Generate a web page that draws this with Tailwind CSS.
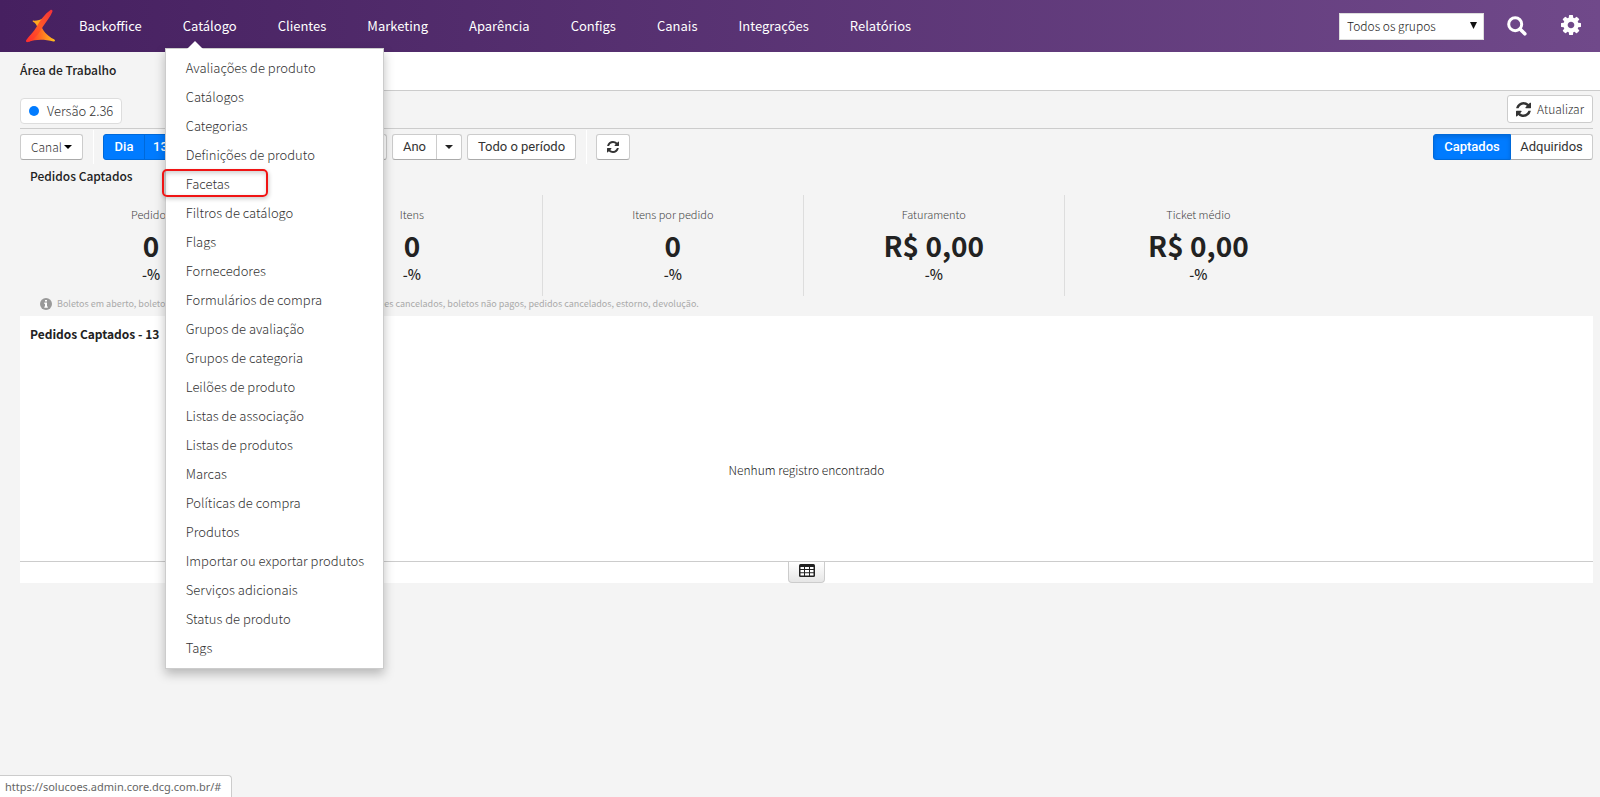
<!DOCTYPE html>
<html lang="pt-BR">
<head>
<meta charset="utf-8">
<title>Área de Trabalho</title>
<script src="https://cdn.jsdelivr.net/npm/@tailwindcss/browser@4"></script>
</head>
<body class="flex min-h-screen flex-col bg-[#f4f4f4] font-['Noto_Sans_CJK_SC',sans-serif] text-[13px] leading-5 text-[#222]">
<svg class="hidden">
  <symbol id="refresh" viewBox="0 0 1536 1536"><path fill="currentColor" d="M1511 928q0 5-1 7-64 268-268 434.500T764 1536q-146 0-282.500-55T238 1324l-129 129q-19 19-45 19t-45-19-19-45V960q0-26 19-45t45-19h448q26 0 45 19t19 45-19 45l-137 137q71 66 161 102t187 36q134 0 250-65t186-179q11-17 53-117 8-23 30-23h192q13 0 22.500 9.500t9.500 22.500zm25-800v448q0 26-19 45t-45 19h-448q-26 0-45-19t-19-45 19-45l138-138Q969 256 768 256q-134 0-250 65T332 500q-11 17-53 117-8 23-30 23H50q-13 0-22.500-9.500T18 608v-7q65-268 270-434.500T768 0q146 0 284 55.500T1297 212l130-129q19-19 45-19t45 19 19 45z"/></symbol>
</svg>

<header class="flex h-[52px] items-center bg-linear-to-r from-[#462060] to-[#70498a]">
  <a href="#" aria-label="Início" class="ml-6 w-[35px]">
    <svg class="h-[35px] w-[33px]" viewBox="0 0 33 35">
      <defs>
        <linearGradient id="lg1" x1="0" y1="0" x2="1" y2="0"><stop offset="0" stop-color="#ff2a2f"/><stop offset=".45" stop-color="#ff6a23"/><stop offset="1" stop-color="#ffc21c"/></linearGradient>
        <linearGradient id="lg2" x1="1" y1="0" x2="0" y2="1"><stop offset="0" stop-color="#f5303a"/><stop offset=".5" stop-color="#ff5a25"/><stop offset="1" stop-color="#ff2a2f"/></linearGradient>
      </defs>
      <path fill="url(#lg1)" d="M17 15.500c1 5.500 6 11.500 13 14.800 1.600.8 1.200 2.500-.5 2.200C20 30 12 30 4 33z"/>
      <path fill="#ffa81e" d="M9 11.600c4 .2 7.500-.6 10-2.600l-5.500 10c-.5-3-2.200-5-4.500-6.200-.6-.4-.5-1.200 0-1.200z"/>
      <path fill="url(#lg2)" d="M26.500 1c1.200-.6 2.400.4 1.900 1.800C26.500 8 22 13 19 17.500c-3.500 6-8 13-15 15.600-1.500.5-2.600-.8-1.700-2.200C5 27 9.500 23.500 12.500 18 16 11 21 5 26.500 1z"/>
    </svg>
  </a>
  <nav class="flex-1">
    <ul class="flex text-[13px] text-white">
      <li class="pr-[21px] pl-5"><a href="#">Backoffice</a></li>
      <li class="relative pr-[21px] pl-5"><a href="#">Catálogo</a>
        <svg class="absolute top-[25px] left-6 z-20 h-2 w-4" viewBox="0 0 16 8"><path fill="#fff" d="M0 8 8 0l8 8z"/></svg>
        <ul class="absolute top-8 left-0.5 z-10 w-[219px] border border-[#ccc] bg-white pt-1 pb-1.5 text-[13px] font-light whitespace-nowrap text-[#333] shadow-[0_5px_10px_rgba(0,0,0,0.25)]">
          <li><a href="#" class="block px-5 leading-[29px]">Avaliações de produto</a></li>
          <li><a href="#" class="block px-5 leading-[29px]">Catálogos</a></li>
          <li><a href="#" class="block px-5 leading-[29px]">Categorias</a></li>
          <li><a href="#" class="block px-5 leading-[29px]">Definições de produto</a></li>
          <li class="relative"><a href="#" class="block px-5 leading-[29px]">Facetas</a><span class="absolute top-0 -left-1 h-7 w-[106px] rounded-[5px] border-2 border-[#f01414] shadow-[1px_2px_4px_rgba(0,0,0,0.2),inset_1px_2px_5px_rgba(0,0,0,0.2)]"></span></li>
          <li><a href="#" class="block px-5 leading-[29px]">Filtros de catálogo</a></li>
          <li><a href="#" class="block px-5 leading-[29px]">Flags</a></li>
          <li><a href="#" class="block px-5 leading-[29px]">Fornecedores</a></li>
          <li><a href="#" class="block px-5 leading-[29px]">Formulários de compra</a></li>
          <li><a href="#" class="block px-5 leading-[29px]">Grupos de avaliação</a></li>
          <li><a href="#" class="block px-5 leading-[29px]">Grupos de categoria</a></li>
          <li><a href="#" class="block px-5 leading-[29px]">Leilões de produto</a></li>
          <li><a href="#" class="block px-5 leading-[29px]">Listas de associação</a></li>
          <li><a href="#" class="block px-5 leading-[29px]">Listas de produtos</a></li>
          <li><a href="#" class="block px-5 leading-[29px]">Marcas</a></li>
          <li><a href="#" class="block px-5 leading-[29px]">Políticas de compra</a></li>
          <li><a href="#" class="block px-5 leading-[29px]">Produtos</a></li>
          <li><a href="#" class="block px-5 leading-[29px]">Importar ou exportar produtos</a></li>
          <li><a href="#" class="block px-5 leading-[29px]">Serviços adicionais</a></li>
          <li><a href="#" class="block px-5 leading-[29px]">Status de produto</a></li>
          <li><a href="#" class="block px-5 leading-[29px]">Tags</a></li>
        </ul>
      </li>
      <li class="pr-[21px] pl-5"><a href="#">Clientes</a></li>
      <li class="pr-[21px] pl-5"><a href="#">Marketing</a></li>
      <li class="pr-[21px] pl-5"><a href="#">Aparência</a></li>
      <li class="pr-[21px] pl-5"><a href="#">Configs</a></li>
      <li class="pr-[21px] pl-5"><a href="#">Canais</a></li>
      <li class="pr-[21px] pl-5"><a href="#">Integrações</a></li>
      <li class="pr-[21px] pl-5"><a href="#">Relatórios</a></li>
    </ul>
  </nav>
  <div class="relative">
    <select aria-label="Grupo" class="block h-[27px] w-[145px] appearance-none border border-[#ddd] bg-white pl-[7px] text-[12px] font-light text-[#222]"><option>Todos os grupos</option></select>
    <svg class="pointer-events-none absolute top-[9px] right-[7px] h-[7px] w-[7px]" viewBox="0 0 7 7"><path fill="#111" d="M0 0h7L3.500 7z"/></svg>
  </div>
  <button aria-label="Buscar" class="ml-[23px] text-white"><svg class="h-5 w-5" viewBox="0 0 20 20" fill="none" stroke="currentColor"><circle cx="8.200" cy="8.200" r="6.500" stroke-width="3"/><path d="m13 13 4.800 4.800" stroke-width="3.600" stroke-linecap="round"/></svg></button>
  <button aria-label="Configurações" class="mr-[19px] ml-[34px] text-white"><svg class="mb-[2px] h-5 w-5" viewBox="0 0 1536 1536"><path fill="currentColor" d="M1024 768q0-106-75-181t-181-75-181 75-75 181 75 181 181 75 181-75 75-181zm512-109v222q0 12-8 23t-20 13l-185 28q-19 54-39 91 35 50 107 138 10 12 10 25t-9 23q-27 37-99 108t-94 71q-12 0-26-9l-138-108q-44 23-91 38-16 136-29 186-7 28-36 28H657q-14 0-24.500-8.500T621 1506l-28-184q-49-16-90-37l-141 107q-10 9-25 9-14 0-25-11-126-114-165-168-7-10-7-23 0-12 8-23 15-21 51-66.500t54-70.500q-27-50-41-99L29 913q-13-2-21-12.500T0 877V655q0-12 8-23t19-13l186-28q14-46 39-92-40-57-107-138-10-12-10-24 0-10 9-23 26-36 98.500-107.500T337 135q13 0 26 10l138 107q44-23 91-38 16-136 29-186 7-28 36-28h222q14 0 24.500 8.500T915 30l28 184q49 16 90 37l142-107q9-9 24-9 13 0 25 10 129 119 165 170 7 8 7 22 0 12-8 23-15 21-51 66.500t-54 70.500q26 50 41 98l183 28q13 2 21 12.500t8 23.500z"/></svg></button>
</header>

<div class="flex h-[39px] border-b border-[#ccc] bg-white">
  <h1 class="-mb-px w-[184px] bg-[#f4f4f4] pl-5 text-[12px] leading-9 font-medium">Área de Trabalho</h1>
</div>

<main class="mr-[7px] ml-5">
  <div class="flex h-[38px] items-start justify-between border-b border-[#ccc]">
    <button class="mt-[7px] flex h-[26px] items-center gap-2 rounded border border-[#ddd] bg-white px-2 font-light text-[#333]"><span class="size-2.5 rounded-full bg-[#007bff]"></span>Versão 2.36</button>
    <button class="mt-1 flex h-7 items-center gap-1.5 rounded-[3px] border border-[#ccc] bg-white px-2 text-[12px] font-light text-[#333]"><svg class="size-[15px] text-[#333]"><use href="#refresh"/></svg>Atualizar</button>
  </div>

  <div class="flex h-9 items-center font-[Roboto,sans-serif] text-[13px] text-[#333]">
    <button class="flex h-[26px] w-[63px] items-center justify-center gap-0.5 rounded-[3px] border border-[#ccc] border-b-[#aaa] bg-white font-['Noto_Sans_CJK_SC',sans-serif] text-[12px] font-light">Canal<svg class="h-1 w-2" viewBox="0 0 8 4"><path d="M0 0h8L4 4z"/></svg></button>
    <span class="mr-[9px] ml-[10px] h-[34px] w-px bg-white"></span>
    <div class="flex h-[26px] overflow-hidden rounded-[3px] border border-[#0069d9] bg-[#007bff] font-medium text-white">
      <button class="w-[41px] border-r border-[#0069d9]">Dia</button>
      <button class="w-[121px] pl-2 text-left">13</button>
    </div>
    <div class="ml-[5px] flex h-[26px] rounded-[3px] border border-[#ccc] border-b-[#aaa] bg-white">
      <button class="w-[113px]">Mês</button>
    </div>
    <div class="ml-[5px] flex h-[26px] rounded-[3px] border border-[#ccc] border-b-[#aaa] bg-white">
      <button class="w-11 border-r border-[#ccc]">Ano</button>
      <button aria-label="Escolher ano" class="flex w-6 items-center justify-center"><svg class="h-1 w-2" viewBox="0 0 8 4"><path fill="#222" d="M0 0h8L4 4z"/></svg></button>
    </div>
    <button class="ml-[5px] h-[26px] w-[109px] rounded-[3px] border border-[#ccc] border-b-[#aaa] bg-white">Todo o período</button>
    <span class="mr-[9px] ml-[10px] h-[34px] w-px bg-white"></span>
    <button aria-label="Recarregar" class="flex h-[26px] w-[34px] items-center justify-center rounded-[3px] border border-[#ccc] border-b-[#aaa] bg-white"><svg class="size-3"><use href="#refresh"/></svg></button>
    <div class="ml-auto flex h-[26px]">
      <button class="w-[78px] rounded-l-[3px] border border-[#0069d9] bg-[#007bff] font-medium text-white shadow-[inset_0_2px_4px_rgba(0,0,0,0.15)]">Captados</button>
      <button class="w-[82px] rounded-r-[3px] border border-l-0 border-[#ccc] border-b-[#aaa] bg-white">Adquiridos</button>
    </div>
  </div>

  <section>
    <h2 class="h-[30px] px-2.5 pt-px text-[12px] font-medium">Pedidos Captados</h2>
    <dl class="flex h-[101px] pl-px text-center">
      <div class="w-[16.6%] border-r border-[#ddd] pt-[9px]"><dt class="text-[11px] font-light text-[#444]">Pedidos</dt><dd class="text-[28px] leading-[42px] font-bold">0</dd><dd class="text-sm leading-4 font-medium">-%</dd></div>
      <div class="w-[16.6%] border-r border-[#ddd] pt-[9px]"><dt class="text-[11px] font-light text-[#444]">Itens</dt><dd class="text-[28px] leading-[42px] font-bold">0</dd><dd class="text-sm leading-4 font-medium">-%</dd></div>
      <div class="w-[16.6%] border-r border-[#ddd] pt-[9px]"><dt class="text-[11px] font-light text-[#444]">Itens por pedido</dt><dd class="text-[28px] leading-[42px] font-bold">0</dd><dd class="text-sm leading-4 font-medium">-%</dd></div>
      <div class="w-[16.6%] border-r border-[#ddd] pt-[9px]"><dt class="text-[11px] font-light text-[#444]">Faturamento</dt><dd class="text-[28px] leading-[42px] font-bold">R$ 0,00</dd><dd class="text-sm leading-4 font-medium">-%</dd></div>
      <div class="w-[17%] pt-[9px]"><dt class="text-[11px] font-light text-[#444]">Ticket médio</dt><dd class="text-[28px] leading-[42px] font-bold">R$ 0,00</dd><dd class="text-sm leading-4 font-medium">-%</dd></div>
    </dl>
    <p class="flex h-5 items-center gap-[5px] pb-1 pl-5 text-[9px] text-[#aaa]"><svg class="size-3" viewBox="0 0 12 12"><circle cx="6" cy="6" r="6" fill="#999"/><path fill="#fff" d="M5 2h2v1.600H5zM4.300 4.600H7v3.800h.8v1.300H4.300V8.400H5V5.900h-.7z"/></svg>Boletos em aberto, boletos pagos, cartões em análise, cartões recebidos, cartões cancelados, boletos não pagos, pedidos cancelados, estorno, devolução.</p>
  </section>

  <section class="bg-white">
    <h2 class="flex gap-2 px-2.5 pt-2 text-[12px] font-bold">Pedidos Captados - 13 <span>de agosto</span></h2>
    <p class="flex h-[217px] items-center justify-center pt-[34px] text-[12px] font-light">Nenhum registro encontrado</p>
    <div class="flex h-[22px] justify-center border-t border-[#ccc]">
      <button aria-label="Ver tabela" class="flex h-[21px] w-[37px] items-start justify-center rounded-b border border-t-0 border-[#ccc] bg-linear-to-b from-white to-[#e6e6e6] pt-[2px]"><svg class="h-[13px] w-4" viewBox="0 0 16 13"><rect width="16" height="13" rx="1.500" fill="#222"/><path fill="#fff" d="M1.500 3H5v2H1.500zM6 3h4v2H6zm5 0h3.500v2H11zM1.500 6H5v2.200H1.500zM6 6h4v2.200H6zm5 0h3.500v2.200H11zM1.500 9.300H5v2.200H1.500zm4.500 0h4v2.200H6zm5 0h3.500v2.200H11z"/></svg></button>
    </div>
  </section>
</main>

<footer class="mt-auto h-[22px] w-[232px] rounded-tr border-t border-r border-[#ccc] bg-white pl-[5px] font-['Noto_Sans',sans-serif] text-[11px] leading-[22px] text-[#666]">https://solucoes.admin.core.dcg.com.br/#</footer>
</body>
</html>
